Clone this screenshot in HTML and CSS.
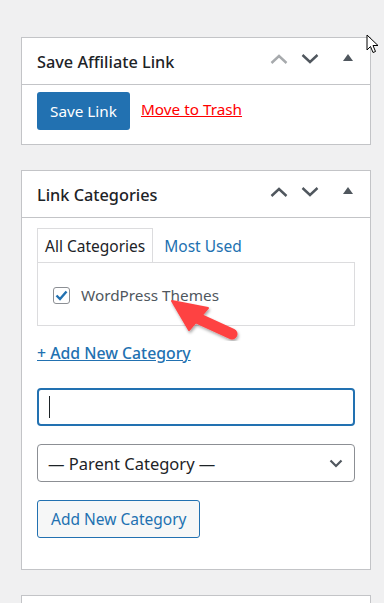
FILE: index.html
```html
<!DOCTYPE html>
<html lang="en">
<head>
  <meta charset="UTF-8">
  <title>Edit Affiliate Link</title>
  <link rel="stylesheet" href="styles.css">
</head>
<body>

  <div class="postbox">
    <div class="postbox-header">
      <h2>Save Affiliate Link</h2>
      <div class="handle-actions">
        <svg class="handle light" width="18" height="10" viewBox="0 0 18 10"><path d="M1.5 9 L9 2 L16.5 9" fill="none" stroke="currentColor" stroke-width="2.4"/></svg>
        <svg class="handle" width="18" height="10" viewBox="0 0 18 10"><path d="M1.5 1 L9 8 L16.5 1" fill="none" stroke="currentColor" stroke-width="2.4"/></svg>
        <svg class="toggle" width="10" height="7" viewBox="0 0 10 7"><path d="M0 7 L5 0 L10 7 Z" fill="currentColor"/></svg>
      </div>
    </div>
    <div class="inside publish">
      <button class="button-primary">Save Link</button>
      <a href="#" class="trash">Move to Trash</a>
    </div>
  </div>

  <div class="postbox">
    <div class="postbox-header">
      <h2>Link Categories</h2>
      <div class="handle-actions">
        <svg class="handle" width="18" height="10" viewBox="0 0 18 10"><path d="M1.5 9 L9 2 L16.5 9" fill="none" stroke="currentColor" stroke-width="2.4"/></svg>
        <svg class="handle" width="18" height="10" viewBox="0 0 18 10"><path d="M1.5 1 L9 8 L16.5 1" fill="none" stroke="currentColor" stroke-width="2.4"/></svg>
        <svg class="toggle" width="10" height="7" viewBox="0 0 10 7"><path d="M0 7 L5 0 L10 7 Z" fill="currentColor"/></svg>
      </div>
    </div>
    <div class="inside categories">
      <ul class="tabs">
        <li class="tab active">All Categories</li>
        <li class="tab"><a href="#">Most Used</a></li>
      </ul>
      <div class="tab-panel">
        <label class="cat-item">
          <span class="checkbox">
            <svg width="13" height="11" viewBox="0 0 13 11"><path d="M1.5 5.5 L5 9 L11.5 1.5" fill="none" stroke="#2271b1" stroke-width="2.4"/></svg>
          </span>
          WordPress Themes
        </label>
      </div>
      <a href="#" class="add-toggle">+ Add New Category</a>
      <div class="text-input"><span class="caret"></span></div>
      <div class="select-input">
        <span>— Parent Category —</span>
        <svg width="14" height="9" viewBox="0 0 14 9"><path d="M1.5 1.5 L7 7 L12.5 1.5" fill="none" stroke="#50575e" stroke-width="2.2"/></svg>
      </div>
      <button class="button-secondary">Add New Category</button>
    </div>
  </div>

  <div class="postbox last"></div>

  <svg class="arrow" width="90" height="60" viewBox="0 0 90 60">
    <defs>
      <filter id="shadow" x="-20%" y="-20%" width="140%" height="140%">
        <feDropShadow dx="1" dy="2" stdDeviation="1.5" flood-color="#000" flood-opacity="0.35"/>
      </filter>
    </defs>
    <g filter="url(#shadow)" fill="#fe4343" stroke="#fe4343">
      <path d="M27 19 L62 35" stroke-width="11" stroke-linecap="round"/>
      <path d="M2 2 L38 9 L19 31 Z" stroke-width="2" stroke-linejoin="round"/>
    </g>
  </svg>

  <svg class="cursor" width="14" height="20" viewBox="0 0 14 20">
    <path d="M1 1 L1 16 L4.5 12.5 L7 18.5 L9.5 17.5 L7 11.5 L12 11.5 Z" fill="#fff" stroke="#000" stroke-width="1" stroke-linejoin="round"/>
  </svg>

</body>
</html>
```

FILE: styles.css
```css
html {
  overflow: hidden;
}
body {
  margin: 0;
  padding: 37px 0 0 21px;
  background-color: #f0f0f1;
  font-family: "Noto Sans", "Open Sans", sans-serif;
  color: #1d2327;
  box-sizing: border-box;
  height: 603px;
  overflow: hidden;
  position: relative;
}
.postbox {
  width: 348px;
  background-color: #fff;
  border: 1px solid #c3c4c7;
  margin-bottom: 25px;
}
.postbox.last {
  height: 20px;
  margin-bottom: 0;
}
.postbox-header {
  display: flex;
  align-items: center;
  justify-content: space-between;
  height: 46px;
  border-bottom: 1px solid #c3c4c7;
}
.postbox-header h2 {
  margin: 0 0 0 15px;
  font-size: 16.3px;
  font-weight: 500;
  padding-top: 1px;
}
.handle-actions {
  display: flex;
  align-items: center;
  color: #50575e;
  margin-right: 17px;
  padding-bottom: 4px;
}
.handle {
  margin-left: 13px;
}
.handle.light {
  color: #a7aaad;
}
.toggle {
  margin-left: 24px;
  margin-bottom: 3px;
}
.inside {
  padding: 0 15px;
}
.publish {
  display: flex;
  align-items: center;
  padding-top: 7px;
  padding-bottom: 14px;
}
.button-primary {
  height: 38px;
  padding: 0 13px;
  background-color: #2271b1;
  color: #fff;
  border: none;
  border-radius: 3px;
  font-family: inherit;
  font-size: 15.3px;
}
.trash {
  margin-left: 11px;
  color: #ff0000;
  font-size: 15.3px;
  margin-bottom: 4px;
}
.categories {
  padding-top: 10px;
  padding-bottom: 31px;
}
.tabs {
  list-style-type: none;
  padding: 0;
  margin: 0;
  display: flex;
  font-size: 15.5px;
}
.tab {
  height: 33px;
  line-height: 34px;
  padding: 0 7px;
  border: 1px solid transparent;
  border-bottom: none;
}
.tab a {
  color: #2271b1;
  text-decoration: none;
  padding-left: 3px;
}
.tab.active {
  background-color: #fff;
  border-color: #dcdcde;
  position: relative;
  z-index: 1;
  margin-bottom: -1px;
}
.tab-panel {
  border: 1px solid #dcdcde;
  height: 62px;
  display: flex;
  align-items: center;
  padding-left: 15px;
}
.cat-item {
  display: flex;
  align-items: center;
  font-size: 15.3px;
  color: #50575e;
  margin-top: 2px;
}
.checkbox {
  width: 15px;
  height: 15px;
  border: 1px solid #8c8f94;
  border-radius: 3px;
  display: flex;
  align-items: center;
  justify-content: center;
  margin-right: 11px;
}
.add-toggle {
  display: inline-block;
  margin-top: 16px;
  color: #2271b1;
  font-size: 15.8px;
  font-weight: 500;
}
.text-input {
  margin-top: 24px;
  height: 34px;
  border: 2px solid #2271b1;
  border-radius: 4px;
  display: flex;
  align-items: center;
  padding-left: 10px;
}
.caret {
  width: 1px;
  height: 22px;
  background-color: #1d2327;
}
.select-input {
  margin-top: 18px;
  height: 36px;
  border: 1px solid #8c8f94;
  border-radius: 4px;
  display: flex;
  align-items: center;
  justify-content: space-between;
  padding: 0 11px 0 10px;
  font-size: 16.5px;
}
.button-secondary {
  display: block;
  margin-top: 18px;
  height: 38px;
  padding: 0 13px;
  background-color: #f6f7f7;
  color: #2271b1;
  border: 1px solid #2271b1;
  border-radius: 3px;
  font-family: inherit;
  font-size: 15.5px;
}
.arrow {
  position: absolute;
  left: 170px;
  top: 299px;
}
.cursor {
  position: absolute;
  left: 366px;
  top: 34px;
}
```
